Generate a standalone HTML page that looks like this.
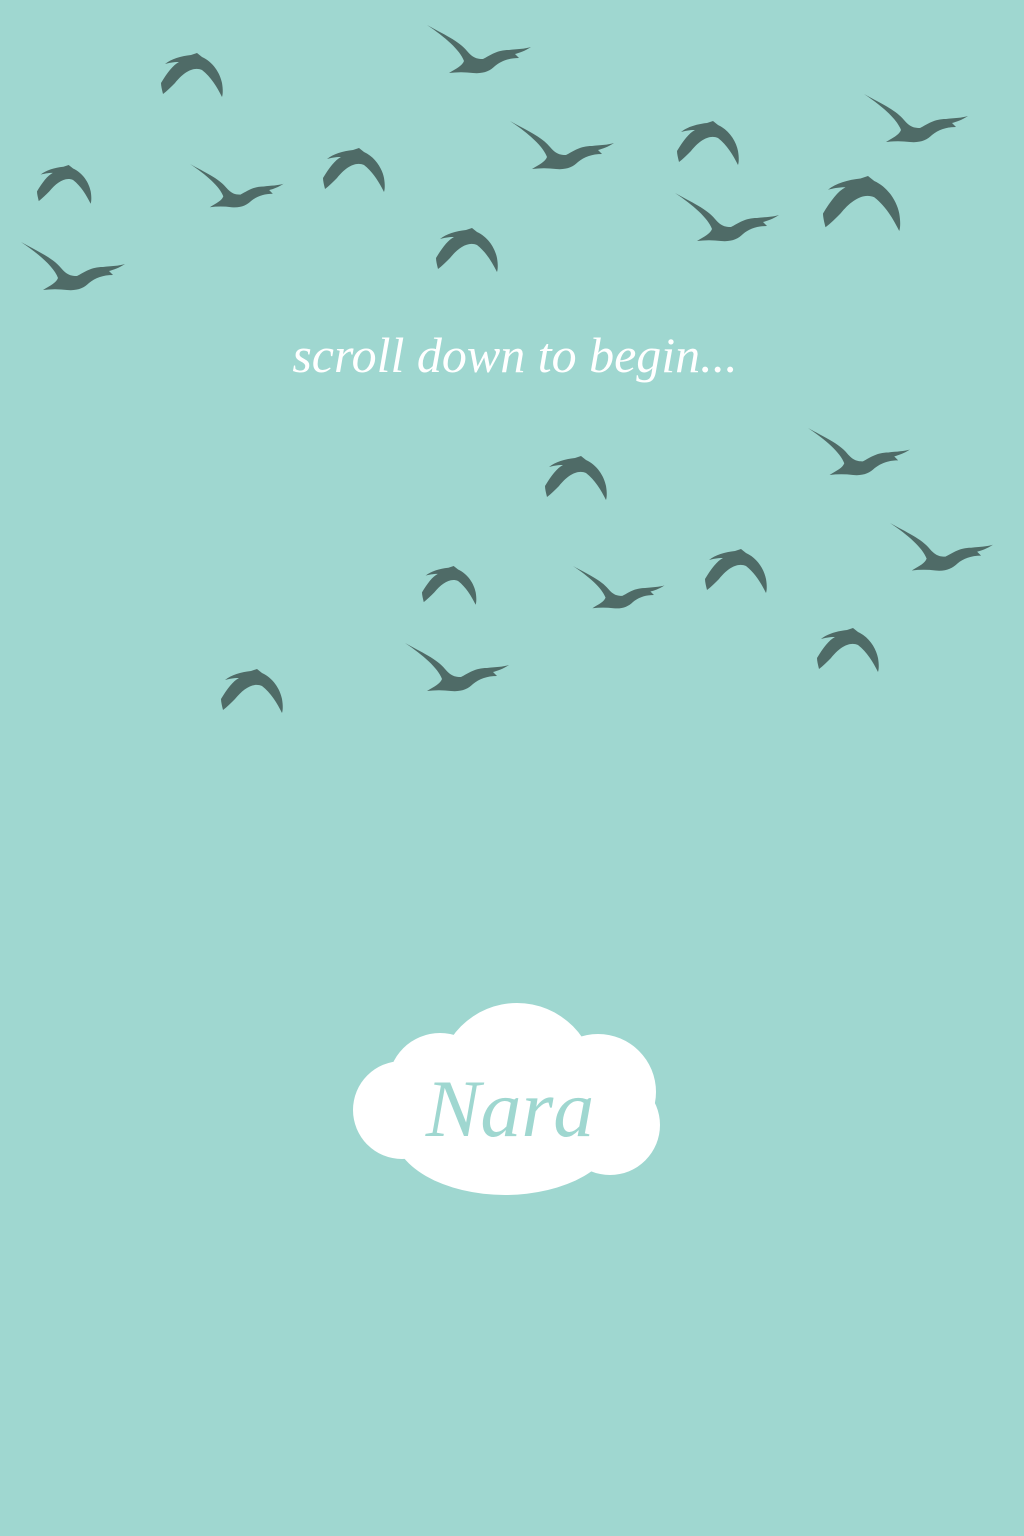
<!DOCTYPE html>
<html><head><meta charset="utf-8"><style>
html,body{margin:0;padding:0}
body{width:1024px;height:1536px;background:#9fd7d0;position:relative;overflow:hidden}
svg{position:absolute;left:0;top:0}
</style></head><body>
<svg width="1024" height="1536" viewBox="0 0 1024 1536">
<defs>
<path id="A" d="M0,0 C16,9 32,16 40,26 C46,33 50,34 56,34 C64,30 70,25 82,25 C90,24 98,24 104,22 C98,26 92,28 88,29 L92,33 C82,33 74,36 68,41 C63,46 56,49 46,48 C38,47 30,47 22,48 C30,43 35,41 37,36 C33,25 18,12 0,0 Z"/>
<path id="B" d="M0,30 C6,20 12,12 18,9 C12,9 8,10 4,11 C10,6 20,3 30,2 L36,0 L41,4 C52,9 59,20 61,30 C62,36 62,41 61,44 C56,34 50,24 41,17 C32,13 22,20 14,30 C10,34 6,38 2,41 C1,37 0,33 0,30 Z"/>
</defs>
<g fill="#4f6b67">
<use href="#A" transform="translate(427,25)"/>
<use href="#A" transform="translate(510,121)"/>
<use href="#A" transform="translate(190,164) scale(0.9)"/>
<use href="#A" transform="translate(21,242)"/>
<use href="#A" transform="translate(675,193)"/>
<use href="#A" transform="translate(864,94)"/>
<use href="#A" transform="translate(808,428) scale(0.98)"/>
<use href="#A" transform="translate(890,523) scale(0.99)"/>
<use href="#A" transform="translate(573,566) scale(0.88)"/>
<use href="#A" transform="translate(405,643)"/>
<use href="#B" transform="translate(161,53)"/>
<use href="#B" transform="translate(37,165) scale(0.88)"/>
<use href="#B" transform="translate(323,148)"/>
<use href="#B" transform="translate(436,228)"/>
<use href="#B" transform="translate(677,121)"/>
<use href="#B" transform="translate(823,176) scale(1.25)"/>
<use href="#B" transform="translate(545,456)"/>
<use href="#B" transform="translate(705,549)"/>
<use href="#B" transform="translate(422,566) scale(0.88)"/>
<use href="#B" transform="translate(817,628)"/>
<use href="#B" transform="translate(221,669)"/>
</g>
<text x="515" y="372" text-anchor="middle" fill="#fff" font-family="Liberation Serif, serif" font-style="italic" font-size="50">scroll down to begin...</text>
<g fill="#fff">
<circle cx="517" cy="1082" r="79"/>
<circle cx="440" cy="1085" r="52"/>
<circle cx="598" cy="1092" r="58"/>
<circle cx="402" cy="1110" r="49"/>
<circle cx="610" cy="1125" r="50"/>
<ellipse cx="505" cy="1130" rx="112" ry="65"/>
</g>
<text x="510" y="1136" text-anchor="middle" fill="#9fd7d0" font-family="Liberation Serif, serif" font-style="italic" font-size="82">Nara</text>
</svg>
</body></html>
